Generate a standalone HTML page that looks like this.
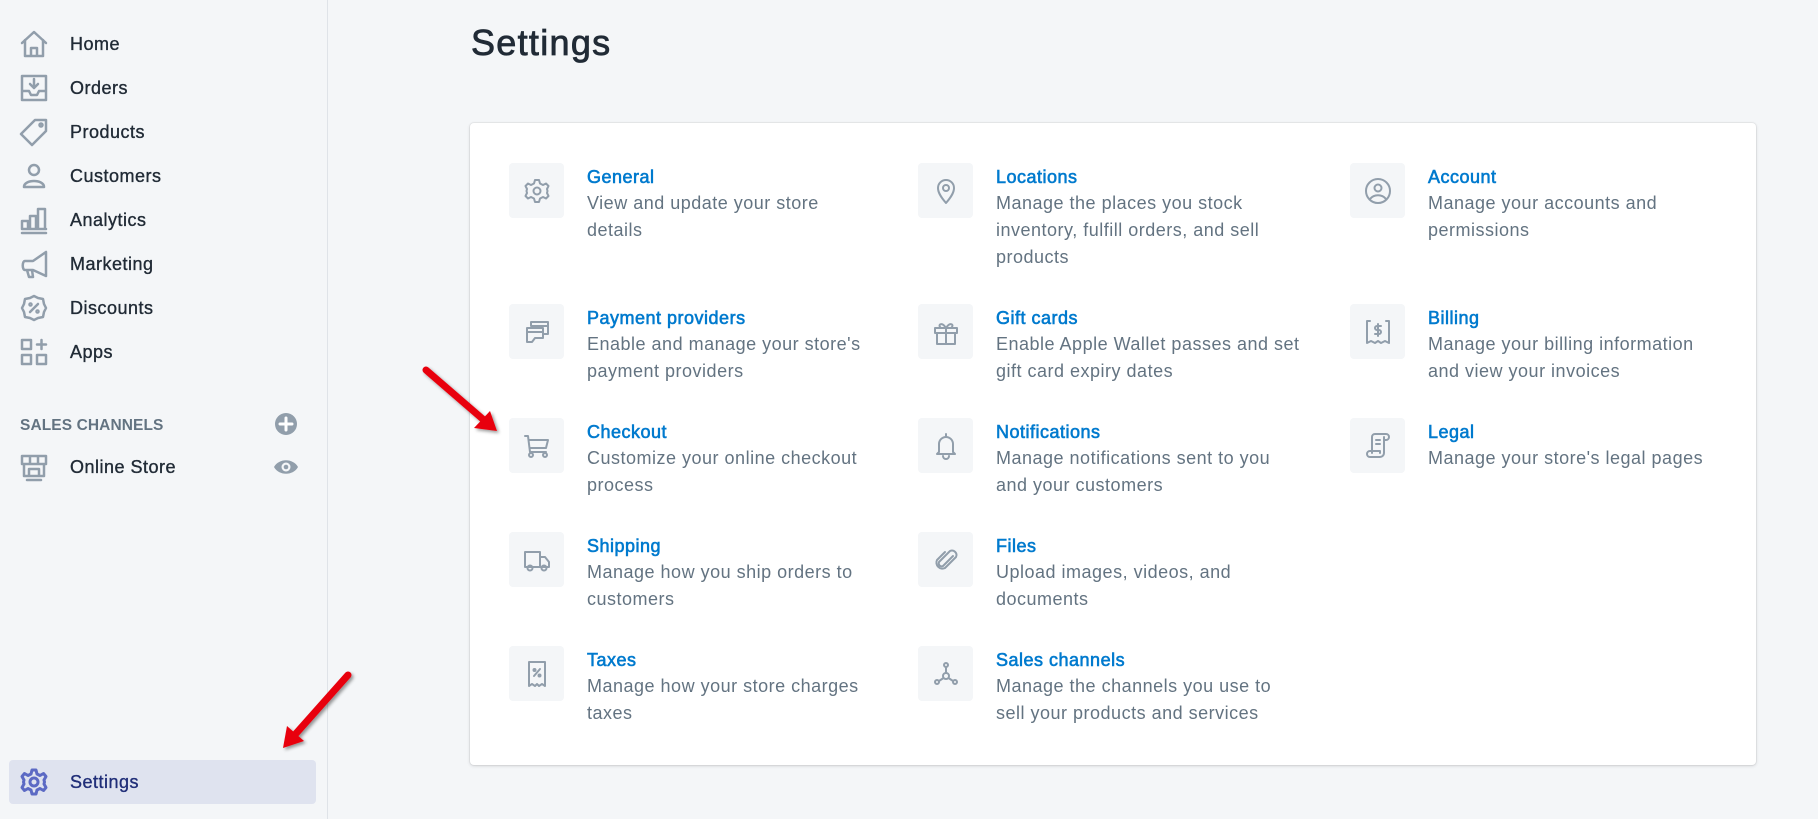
<!DOCTYPE html>
<html><head><meta charset="utf-8"><style>
*{margin:0;padding:0;box-sizing:border-box}
body{width:1818px;height:819px;background:#f4f6f8;font-family:"Liberation Sans",sans-serif;position:relative;overflow:hidden}
.side{position:absolute;left:0;top:0;width:328px;height:819px;border-right:1px solid #dfe3e8;background:#f4f6f8}
.nav{position:absolute;left:0;height:44px;width:328px;display:flex;align-items:center}
.nav svg{position:absolute;left:19px;width:30px;height:30px}
.nav span{position:absolute;left:70px;font-size:18px;color:#212b36;letter-spacing:.5px;-webkit-text-stroke:.35px #212b36}
.hdr{position:absolute;left:20px;top:417px;font-size:15.5px;font-weight:bold;color:#637381;letter-spacing:.1px}
.sel{position:absolute;left:9px;top:760px;width:307px;height:44px;background:#dfe3ef;border-radius:4px}
h1{position:absolute;left:471px;top:22px;font-size:36px;font-weight:normal;color:#212b36;-webkit-text-stroke:.8px #212b36;letter-spacing:1.3px}
.card{position:absolute;left:470px;top:123px;width:1286px;height:642px;background:#fff;border-radius:4px;box-shadow:0 0 0 1px rgba(63,63,68,.06),0 1px 3px rgba(63,63,68,.18)}
.it{position:absolute}
.ib{position:absolute;left:0;top:0;width:55px;height:55px;background:#f4f6f8;border-radius:4px;display:flex;align-items:center;justify-content:center}
.ib svg{width:30px;height:30px}
.tx{position:absolute;left:78px;top:1px;width:305px}
.c1 .tx{width:284px}
.c3 .tx{width:290px}
.tt{font-size:18px;line-height:26px;color:#007ace;letter-spacing:.5px;-webkit-text-stroke:.6px #007ace}
.ds{font-size:18px;line-height:27px;color:#637381;letter-spacing:.5px}
svg{fill:none;stroke:#919eab;stroke-width:2;stroke-linecap:round;stroke-linejoin:round}
</style></head><body>
<div class="side">
 <div class="nav" style="top:22px"><svg viewBox="0 0 30 30" style="stroke-width:2.5"><path d="M3 14 L15 3 L27 14 M6 11 V27 H24 V11 M12 27 V19 H18 V27"/></svg><span>Home</span></div>
 <div class="nav" style="top:66px"><svg viewBox="0 0 30 30" style="stroke-width:2.5"><path d="M3 3 H27 V27 H3 Z M3 18 H10 L12 22 H18 L20 18 H27 M15 6 V15 M11 11 L15 15 L19 11"/></svg><span>Orders</span></div>
 <div class="nav" style="top:110px"><svg viewBox="0 0 30 30" style="stroke-width:2.5"><path d="M16 3 H27 V14 L13 28 L2 17 Z"/><circle cx="22" cy="8" r="1.5"/></svg><span>Products</span></div>
 <div class="nav" style="top:154px"><svg viewBox="0 0 30 30" style="stroke-width:2.5"><circle cx="15" cy="9" r="5"/><path d="M5 26 C5 18 25 18 25 26 Z"/></svg><span>Customers</span></div>
 <div class="nav" style="top:198px"><svg viewBox="0 0 30 30" style="stroke-width:2.5"><path d="M3 28 H27 M3 24 V16 H9 V24 M11 24 V11 H17 V24 M19 24 V4 H26 V24 Z M3 24 H27"/></svg><span>Analytics</span></div>
 <div class="nav" style="top:242px"><svg viewBox="0 0 30 30" style="stroke-width:2.5"><path d="M27 3 V27 L14 21 H6 C3 21 3 12 6 12 H14 Z M8 21 L10 28 H14 L13 21"/></svg><span>Marketing</span></div>
 <div class="nav" style="top:286px"><svg viewBox="0 0 30 30" style="stroke-width:2.5"><path d="M15 3 L19 5 L24 6 L25 11 L27 15 L25 19 L24 24 L19 25 L15 27 L11 25 L6 24 L5 19 L3 15 L5 11 L6 6 L11 5 Z M11 19 L19 11"/><circle cx="11.5" cy="11.5" r="1"/><circle cx="18.5" cy="18.5" r="1"/></svg><span>Discounts</span></div>
 <div class="nav" style="top:330px"><svg viewBox="0 0 30 30" style="stroke-width:2.5"><path d="M3 3 H12 V12 H3 Z M3 18 H12 V27 H3 Z M18 18 H27 V27 H18 Z M22.5 3 V12 M18 7.5 H27"/></svg><span>Apps</span></div>
 <div class="hdr">SALES CHANNELS</div>
 <svg style="position:absolute;left:274px;top:412px;width:24px;height:24px" viewBox="0 0 24 24"><circle cx="12" cy="12" r="11" fill="#919eab" stroke="none"/><path d="M12 6 V18 M6 12 H18" stroke="#fff" stroke-width="3"/></svg>
 <div class="nav" style="top:445px"><svg viewBox="0 0 30 30" style="stroke-width:2.5"><path d="M3 4 H27 V12 H3 Z M5 12 V24 H25 V12 M10 24 V17 H20 V24 M8 28 H22 M11 4 V12 M19 4 V12"/></svg><span>Online Store</span></div>
 <svg style="position:absolute;left:273px;top:455px;width:26px;height:24px" viewBox="0 0 26 24"><path d="M1 12 C6 3 20 3 25 12 C20 21 6 21 1 12 Z" fill="#919eab" stroke="none"/><circle cx="13" cy="12" r="4.5" fill="#f4f6f8" stroke="none"/><circle cx="13" cy="12" r="2.3" fill="#919eab" stroke="none"/></svg>
 <div class="sel"></div>
 <div class="nav" style="top:760px"><svg viewBox="0 0 30 30" style="stroke:#5c6ac4;stroke-width:3"><path d="M13 3 H17 L18 7 L21 8.5 L24.5 6.5 L27 9.5 L25 13 L25.5 15 L25 17 L27 20.5 L24.5 23.5 L21 21.5 L18 23 L17 27 H13 L12 23 L9 21.5 L5.5 23.5 L3 20.5 L5 17 L4.5 15 L5 13 L3 9.5 L5.5 6.5 L9 8.5 L12 7 Z"/><circle cx="15" cy="15" r="4"/></svg><span style="color:#202e78;-webkit-text-stroke:.35px #202e78">Settings</span></div>
</div>
<h1>Settings</h1>
<div class="card">
 <div class="it c1" style="left:39px;top:40px"><div class="ib"><svg viewBox="0 0 30 30"><path d="M13 4 H17 L18 7.5 L21 9 L24 7.5 L26.5 10 L25 13 L25.5 15 L25 17 L26.5 20 L24 22.5 L21 21 L18 22.5 L17 26 H13 L12 22.5 L9 21 L6 22.5 L3.5 20 L5 17 L4.5 15 L5 13 L3.5 10 L6 7.5 L9 9 L12 7.5 Z"/><circle cx="15" cy="15" r="3.5"/></svg></div><div class="tx"><div class="tt">General</div><div class="ds">View and update your store details</div></div></div>
 <div class="it" style="left:448px;top:40px"><div class="ib"><svg viewBox="0 0 30 30"><path d="M15 27 C9 20 7 16 7 12 A8 8 0 0 1 23 12 C23 16 21 20 15 27 Z"/><circle cx="15" cy="12" r="3"/></svg></div><div class="tx"><div class="tt">Locations</div><div class="ds">Manage the places you stock inventory, fulfill orders, and sell products</div></div></div>
 <div class="it c3" style="left:880px;top:40px"><div class="ib"><svg viewBox="0 0 30 30"><circle cx="15" cy="15" r="12"/><circle cx="15" cy="12" r="3.5"/><path d="M7 23 C11 18 19 18 23 23"/></svg></div><div class="tx"><div class="tt">Account</div><div class="ds">Manage your accounts and permissions</div></div></div>

 <div class="it c1" style="left:39px;top:181px"><div class="ib"><svg viewBox="0 0 30 30"><path d="M9 5 H26 V17 H21 M9 5 V9 M9 9 H26 M5 11 H21 V21 H13 L10 25 H5 Z M5 15 H21"/></svg></div><div class="tx"><div class="tt">Payment providers</div><div class="ds">Enable and manage your store's payment providers</div></div></div>
 <div class="it" style="left:448px;top:181px"><div class="ib"><svg viewBox="0 0 30 30"><path d="M4 11 H26 V16 H4 Z M6 16 V27 H24 V16 M15 11 V27 M15 11 C11 4 6 8 10 11 M15 11 C19 4 24 8 20 11"/></svg></div><div class="tx"><div class="tt">Gift cards</div><div class="ds">Enable Apple Wallet passes and set gift card expiry dates</div></div></div>
 <div class="it c3" style="left:880px;top:181px"><div class="ib"><svg viewBox="0 0 30 30"><path d="M7 4 H4 V26 L8 24 L12 26 L15 24 L18 26 L22 24 L26 26 V4 H23 M15 7 V19 M18 9 H14 A2 2 0 0 0 14 13 H16 A2 2 0 0 1 16 17 H12"/></svg></div><div class="tx"><div class="tt">Billing</div><div class="ds">Manage your billing information and view your invoices</div></div></div>

 <div class="it c1" style="left:39px;top:295px"><div class="ib"><svg viewBox="0 0 30 30"><path d="M3 5 H6 L8 21 H24 M7 9 H26 L24 17 H8"/><circle cx="9" cy="24" r="2"/><circle cx="23" cy="24" r="2"/></svg></div><div class="tx"><div class="tt">Checkout</div><div class="ds">Customize your online checkout process</div></div></div>
 <div class="it" style="left:448px;top:295px"><div class="ib"><svg viewBox="0 0 30 30"><path d="M15 3 V5 M8 21 V13 A7 7 0 0 1 22 13 V21 L24 23 H6 Z M12 25 A3 3 0 0 0 18 25"/></svg></div><div class="tx"><div class="tt">Notifications</div><div class="ds">Manage notifications sent to you and your customers</div></div></div>
 <div class="it c3" style="left:880px;top:295px"><div class="ib"><svg viewBox="0 0 30 30"><path d="M9 22 V6 A3 3 0 0 1 12 3 H23 A3 3 0 0 1 23 9 H21 M21 6 V22 A4 4 0 0 1 17 26 H7 A3 3 0 0 1 7 20 H17 V22 M13 9 H17 M13 13 H17"/></svg></div><div class="tx"><div class="tt">Legal</div><div class="ds">Manage your store's legal pages</div></div></div>

 <div class="it c1" style="left:39px;top:409px"><div class="ib"><svg viewBox="0 0 30 30"><path d="M3 7 H18 V22 H3 Z M18 12 H23 L27 17 V22 H18"/><circle cx="8" cy="23" r="2.5"/><circle cx="22" cy="23" r="2.5"/></svg></div><div class="tx"><div class="tt">Shipping</div><div class="ds">Manage how you ship orders to customers</div></div></div>
 <div class="it" style="left:448px;top:409px"><div class="ib"><svg viewBox="0 0 30 30"><path d="M22 11 L12 21 A3 3 0 0 1 8 17 L19 6 A4.5 4.5 0 0 1 25 12 L14 23 A6 6 0 0 1 6 15 L14 7"/></svg></div><div class="tx"><div class="tt">Files</div><div class="ds">Upload images, videos, and documents</div></div></div>

 <div class="it c1" style="left:39px;top:523px"><div class="ib"><svg viewBox="0 0 30 30"><path d="M7 3 H23 V27 L20 25 L17 27 L15 25 L13 27 L10 25 L7 27 Z M12 17 L18 10"/><circle cx="12.5" cy="11" r="1"/><circle cx="17.5" cy="16.5" r="1"/></svg></div><div class="tx"><div class="tt">Taxes</div><div class="ds">Manage how your store charges taxes</div></div></div>
 <div class="it" style="left:448px;top:523px"><div class="ib"><svg viewBox="0 0 30 30"><circle cx="15" cy="6" r="2"/><circle cx="15" cy="17" r="3"/><circle cx="6" cy="23" r="2"/><circle cx="24" cy="23" r="2"/><path d="M15 8 V14 M12.5 19 L8 22 M17.5 19 L22 22"/></svg></div><div class="tx"><div class="tt">Sales channels</div><div class="ds">Manage the channels you use to sell your products and services</div></div></div>
</div>
<svg style="position:absolute;left:0;top:0;width:1818px;height:819px;overflow:visible" viewBox="0 0 1818 819">
 <defs><filter id="sh"><feDropShadow dx="2" dy="2" stdDeviation="1.5" flood-color="#000" flood-opacity=".4"/></filter></defs>
 <g filter="url(#sh)" style="stroke:none">
  <path d="M426 370 L485 421" stroke="#e8000b" stroke-width="7" stroke-linecap="round" fill="none"/>
  <path d="M497 431 L474 428 L490 411 Z" fill="#e8000b"/>
  <path d="M348 675 L292 738" stroke="#e8000b" stroke-width="7" stroke-linecap="round" fill="none"/>
  <path d="M283 748 L287 726 L304 741 Z" fill="#e8000b"/>
 </g>
</svg>
</body></html>
